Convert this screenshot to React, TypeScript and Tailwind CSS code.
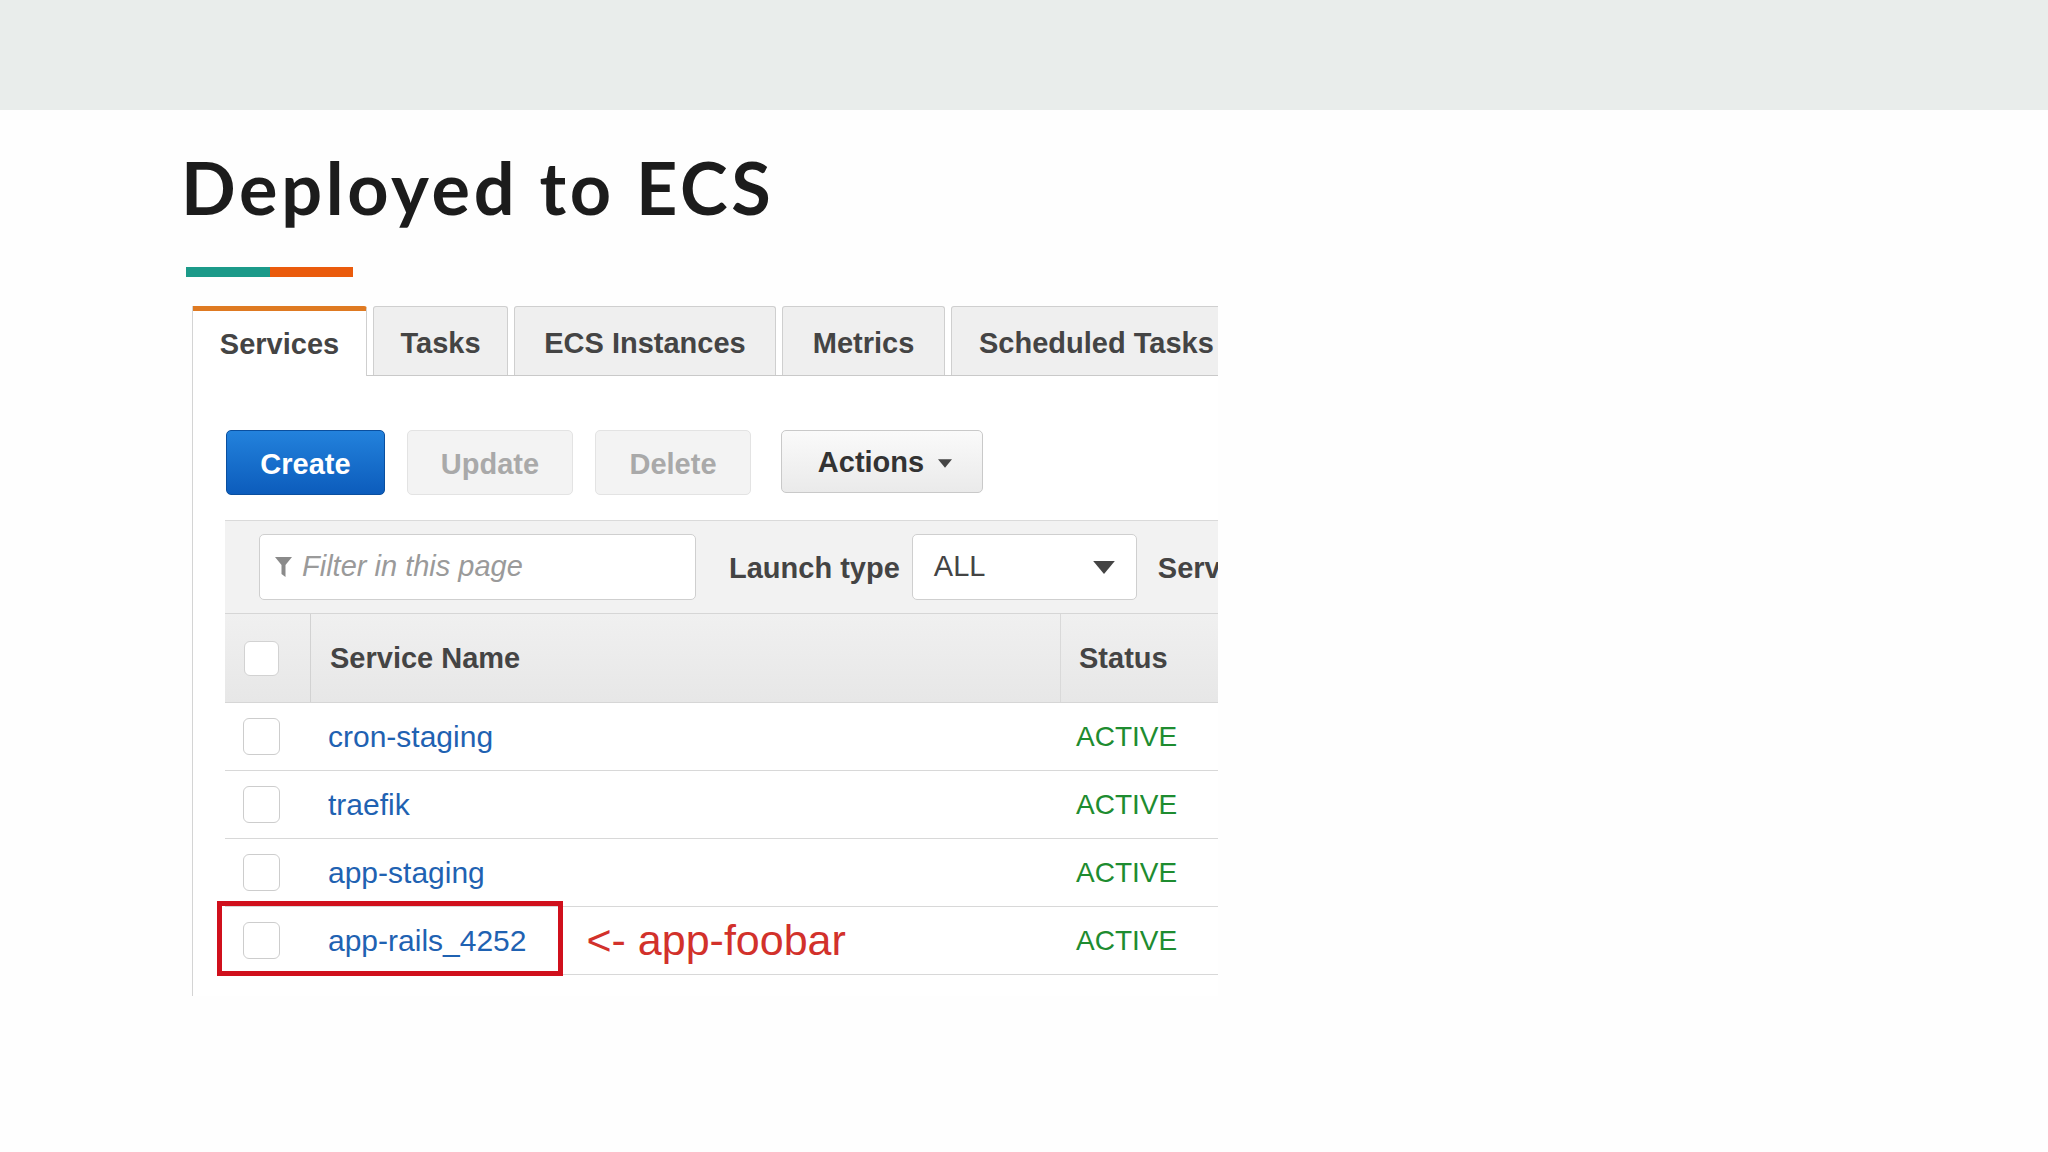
import React from "react";

const sans = "font-['Liberation_Sans',Arial,sans-serif]";

function Funnel() {
  return (
    <svg width="17" height="22" viewBox="0 0 17 22" className="shrink-0">
      <path d="M0 1 L17 1 L10.5 9 L10.5 21 L6.5 18 L6.5 9 Z" fill="#8a8a8a" />
    </svg>
  );
}

function Caret({ w, h, color }: { w: number; h: number; color: string }) {
  return (
    <svg width={w} height={h} viewBox="0 0 10 6" className="shrink-0">
      <path d="M0 0 L10 0 L5 6 Z" fill={color} />
    </svg>
  );
}

function Check({ header }: { header?: boolean }) {
  return (
    <div
      className={
        header
          ? "w-[35px] h-[35px] rounded-[6px] bg-white border border-[#d2d2d2]"
          : "w-[37px] h-[37px] rounded-[6px] bg-white border border-[#cdcdcd]"
      }
    />
  );
}

const rows = ["cron-staging", "traefik", "app-staging", "app-rails_4252"];

export default function App() {
  return (
    <div className="w-[2048px] h-[1152px] bg-[#fefefe] overflow-hidden">
      <div className="h-[110px] bg-[#e9edeb]" />

      <h1 className="mt-[41px] ml-[181px] font-['Lato',sans-serif] font-bold text-[72px] leading-none text-[#1c1c1c] tracking-[3.7px]">
        Deployed to ECS
      </h1>
      <div className="mt-[44px] ml-[186px] flex h-[10px]">
        <div className="w-[84px] bg-[#1c9a89]" />
        <div className="w-[83px] bg-[#ea5b0c]" />
      </div>

      {/* console screenshot */}
      <div className={`${sans} relative mt-[29px] ml-[192px] w-[1026px] h-[690px] overflow-hidden border-l border-[#d4d4d4] bg-white`}>
        {/* tabs */}
        <div className="flex w-[1200px] h-[70px]">
          <div className="w-[174px] h-[70px] shrink-0 bg-white border-t-[5px] border-t-[#df7a22] border-r border-r-[#cfcfcf] rounded-tr-[3px] flex items-center justify-center pt-[2px] text-[29px] font-bold text-[#444]">
            Services
          </div>
          <div className="flex-1 flex gap-[6px] pl-[6px] border-b border-[#c9c9c9]">
            {[
              ["Tasks", "w-[135px]"],
              ["ECS Instances", "w-[262px]"],
              ["Metrics", "w-[163px]"],
            ].map(([t, w]) => (
              <div
                key={t}
                className={`${w} shrink-0 h-[69px] bg-[#efefef] border border-b-0 border-[#cfcfcf] rounded-t-[3px] flex items-center justify-center pt-[5px] text-[29px] font-bold text-[#444]`}
              >
                {t}
              </div>
            ))}
            <div className="w-[300px] shrink-0 h-[69px] bg-[#efefef] border border-b-0 border-[#cfcfcf] rounded-t-[3px] flex items-center pl-[27px] pt-[5px] text-[29px] font-bold text-[#444] whitespace-nowrap">
              Scheduled Tasks
            </div>
          </div>
        </div>

        <div className="pl-[32px] pt-[54px]">
          {/* buttons */}
          <div className="flex h-[65px] ml-[1px] text-[29px] font-bold">
            <div className="w-[159px] h-[65px] rounded-[5px] bg-gradient-to-b from-[#2382dc] to-[#0c5cbc] border border-[#0a4f9f] text-white flex items-center justify-center pt-[4px]">
              Create
            </div>
            <div className="ml-[22px] w-[166px] h-[65px] rounded-[5px] bg-[#f3f3f3] border border-[#e3e3e3] text-[#a9a9a9] flex items-center justify-center pt-[4px]">
              Update
            </div>
            <div className="ml-[22px] w-[156px] h-[65px] rounded-[5px] bg-[#f3f3f3] border border-[#e3e3e3] text-[#a9a9a9] flex items-center justify-center pt-[4px]">
              Delete
            </div>
            <div className="ml-[30px] w-[202px] h-[63px] rounded-[5px] bg-gradient-to-b from-[#fafafa] to-[#eaeaea] border border-[#c9c9c9] text-[#333] flex items-center justify-center gap-[14px] pl-[6px] pt-[3px]">
              Actions
              <Caret w={14} h={9} color="#444" />
            </div>
          </div>

          {/* filter bar */}
          <div className="mt-[25px] w-[1100px] h-[93px] bg-[#f2f2f2] border-t border-[#dadada] flex items-start pl-[34px] pt-[13px] whitespace-nowrap">
            <div className="w-[437px] shrink-0 h-[66px] bg-white border border-[#cfcfcf] rounded-[5px] flex items-center pl-[15px] gap-[10px]">
              <Funnel />
              <span className="italic text-[29px] text-[#9a9a9a]">Filter in this page</span>
            </div>
            <div className="ml-[33px] shrink-0 h-[66px] flex items-center pt-[3px] text-[29px] font-bold text-[#444]">
              Launch type
            </div>
            <div className="ml-[12px] w-[225px] shrink-0 h-[66px] bg-white border border-[#cfcfcf] rounded-[5px] flex items-center pl-[21px] pr-[21px] justify-between text-[29px] text-[#444]">
              ALL
              <Caret w={22} h={13} color="#444" />
            </div>
            <div className="ml-[21px] shrink-0 h-[66px] flex items-center pt-[3px] text-[29px] font-bold text-[#444]">
              Service type
            </div>
          </div>

          {/* table header */}
          <div className="w-[1100px] h-[90px] flex bg-gradient-to-b from-[#f0f0f0] to-[#e7e7e7] border-t border-b border-[#d6d6d6] text-[29px] font-bold text-[#444]">
            <div className="w-[86px] shrink-0 border-r border-[#d2d2d2] flex items-center pl-[19px]">
              <Check header />
            </div>
            <div className="w-[750px] shrink-0 border-r border-[#d9d9d9] flex items-center pl-[19px] pt-[2px]">
              Service Name
            </div>
            <div className="flex items-center pl-[18px] pt-[2px]">Status</div>
          </div>

          {/* rows */}
          {rows.map((name, i) => (
            <div key={name} className="relative w-[1100px] h-[68px] flex border-b border-[#d8d8d8]">
              <div className="w-[86px] shrink-0 flex items-center pl-[18px]">
                <Check />
              </div>
              <div className="w-[751px] shrink-0 flex items-center pl-[17px] text-[30px] text-[#1f62b2]">
                {name}
                {i === 3 && (
                  <span className="ml-[60px] text-[43px] text-[#d2312b]">&lt;- app-foobar</span>
                )}
              </div>
              <div className="flex items-center pl-[14px] text-[28px] text-[#1e8c30]">ACTIVE</div>
              {i === 3 && (
                <div className="absolute -top-[6px] -left-[8px] w-[346px] h-[75px] border-[5px] border-[#d0101c]" />
              )}
            </div>
          ))}
        </div>
      </div>
    </div>
  );
}
